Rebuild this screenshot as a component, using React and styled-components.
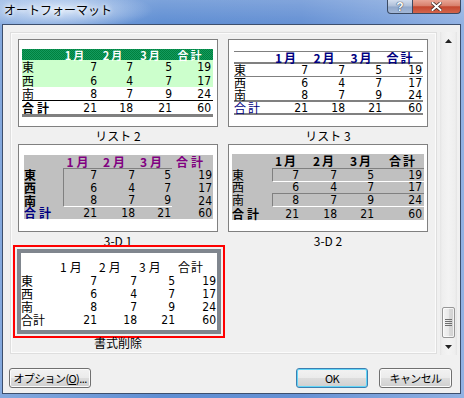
import React from 'react';
import styled, { createGlobalStyle, css } from 'styled-components';

const JP = `"Noto Sans CJK JP", "Liberation Sans", sans-serif`;
const NUM = `"Liberation Sans Narrow", "DejaVu Sans Condensed", "Liberation Sans", "Noto Sans CJK JP", sans-serif`;

const GlobalStyle = createGlobalStyle`
  html, body { margin: 0; padding: 0; }
  body { width: 464px; height: 398px; overflow: hidden; background: #6f9ad8; font-family: ${JP}; }
  *, *::before, *::after { box-sizing: border-box; }
`;

const HEAD = ['1月', '2月', '3月', '合計'];
const ROWS = [
  ['東', 7, 7, 5, 19],
  ['西', 6, 4, 7, 17],
  ['南', 8, 7, 9, 24],
];
const TOTAL = ['合計', 21, 18, 21, 60];

/* ---------- window chrome ---------- */
const Frame = styled.div`
  width: 464px;
  height: 398px;
  display: flex;
  flex-direction: column;
  padding: 0 3px 4px 2px;
  background:
    radial-gradient(ellipse 95px 20px at 58px 10px, rgba(222, 234, 250, 0.95), rgba(222, 234, 250, 0) 100%),
    linear-gradient(to bottom, rgba(255, 255, 255, 0.18), rgba(255, 255, 255, 0) 24px),
    linear-gradient(to right, #84a9de 0%, #5f8ed3 35%, #6691d4 65%, #92b2e3 100%);
`;

const TitleBar = styled.div`
  height: 24px;
  flex: none;
  display: flex;
  align-items: flex-start;
`;

const TitleText = styled.div`
  padding: 3px 0 0 2px;
  font: 12px/14px ${JP};
  color: #000;
  text-shadow: 0 0 4px #fff, 0 0 6px #fff;
`;

const CaptionButtons = styled.div`
  margin-left: auto;
  display: flex;
  height: 14px;
`;

const CapBtn = styled.div`
  height: 14px;
  width: ${p => p.$w}px;
  display: flex;
  align-items: center;
  justify-content: center;
  border: 1px solid #3a4a63;
  border-top: none;
  ${p => p.$close
    ? css`
        border-left: none;
        border-radius: 0 0 4px 0;
        background: linear-gradient(#e9a696 0%, #d8806c 45%, #c4472f 52%, #d3654c 100%);
      `
    : css`
        border-radius: 0 0 0 4px;
        background: linear-gradient(#d3deee 0%, #aebfd9 48%, #91a8ca 52%, #a3b8d8 100%);
      `}
  color: #fff;
  font: bold 12px/12px "Liberation Sans", sans-serif;
  text-shadow: 0 0 1px #27344a, 0 0 1px #27344a;
`;

const Client = styled.div`
  flex: 1;
  display: flex;
  flex-direction: column;
  background: #f0f0f0;
  border: 1px solid #3d4f6d;
  padding: 7px 3px 5px 7px;
`;

const Main = styled.div`
  display: flex;
  align-items: flex-start;
  gap: 3px;
  height: 323px;
`;

const Panel = styled.div`
  width: 427px;
  height: 322px;
  border: 1px solid #dedede;
  box-shadow: inset 0 0 0 1px #fbfbfb;
  overflow: hidden;
  padding: 6px 0 0 7px;
`;

/* ---------- scrollbar ---------- */
const ScrollBar = styled.div`
  width: 17px;
  height: 323px;
  display: flex;
  flex-direction: column;
  background: linear-gradient(to right, #e4e4e4 0, #eeeeee 2px, #f3f3f3 50%, #eeeeee 15px, #e4e4e4 100%);
`;

const ArrowBox = styled.div`
  height: 17px;
  flex: none;
  display: flex;
  align-items: center;
  justify-content: center;
`;

const Track = styled.div`
  flex: 1;
  display: flex;
  flex-direction: column;
  justify-content: flex-end;
  align-items: center;
`;

const Thumb = styled.div`
  width: 13px;
  height: 31px;
  border: 1px solid #979797;
  border-radius: 2px;
  background: linear-gradient(to right, #f4f4f4 0%, #e9e9e9 50%, #dadada 51%, #d1d1d1 100%);
  box-shadow: inset 0 0 0 1px rgba(255, 255, 255, 0.7);
  display: flex;
  align-items: center;
  justify-content: center;
`;

/* ---------- gallery ---------- */
const Gallery = styled.div`
  display: grid;
  grid-template-columns: 200px 200px;
  column-gap: 10px;
  grid-auto-rows: 105px;
`;

const Item = styled.div`
  display: flex;
  flex-direction: column;
`;

const Preview = styled.div`
  flex: none;
  background: #fff;
  ${p => p.$selected
    ? css`
        width: 204px;
        height: 85px;
        margin-left: -1px;
        border: 4px solid #80868e;
        outline: 2px solid #ff0000;
        outline-offset: 2px;
      `
    : css`
        width: 200px;
        height: 88px;
        border: 1px solid #808080;
      `}
`;

const Caption = styled.div`
  height: 17px;
  font: 12px/17px ${JP};
  text-align: center;
  color: #000;
  white-space: pre;
`;

/* ---------- sheet parts ---------- */
const Sheet = styled.div`
  margin: ${p => p.$mt}px 0 0 ${p => p.$ml}px;
  width: ${p => p.$w}px;
  background: ${p => p.$bg || 'transparent'};
`;

const Row = styled.div`
  display: grid;
  grid-template-columns: ${p => p.$cols};
  height: ${p => p.$h}px;
  align-items: ${p => p.$align || 'center'};
  background: ${p => p.$bg || 'transparent'};
  border-top: ${p => p.$bt || 'none'};
  border-bottom: ${p => p.$bb || 'none'};
  ${p => p.$dots && css`
    background: repeating-conic-gradient(#00813e 0 25%, #139a5e 0 50%) 0 0 / 2px 2px;
  `}
`;

const Cell = styled.span`
  display: block;
  align-self: center;
  font-family: ${p => (p.$jp ? JP : NUM)};
  font-size: ${p => p.$fs || 12}px;
  line-height: 12px;
  text-align: ${p => p.$align || 'right'};
  padding-right: ${p => (p.$pr ?? 1)}px;
  padding-left: ${p => p.$pl || 0}px;
  color: ${p => p.$color || '#000'};
  font-weight: ${p => (p.$bold ? 700 : 400)};
  letter-spacing: ${p => p.$ls || 0}px;
  white-space: nowrap;
`;

const Group = styled.div`
  display: grid;
  grid-template-columns: ${p => p.$cols};
  height: 100%;
  align-items: center;
  border-left: 1px solid #808080;
  border-top: ${p => (p.$top ? '1px solid #808080' : 'none')};
  border-bottom: ${p => (p.$bottom ? '1px solid #ffffff' : 'none')};
`;

/* ---------- formats ---------- */
function List2() {
  const cols = '36px 40px 36px 39px 40px';
  return (
    <Sheet $mt={9} $ml={3} $w={191}>
      <Row $cols={cols} $h={11} $dots>
        <span />
        {HEAD.map(h => (
          <Cell key={h} $jp $fs={11} $bold $color="#fff" $align="center" $pr={5} $ls={2}>{h}</Cell>
        ))}
      </Row>
      {ROWS.map((r, i) => (
        <Row key={r[0]} $cols={cols} $h={i === 1 ? 13 : 14}
          $bg={i < 2 ? '#ccffcc' : '#fff'} $bb={i === 2 ? '1px solid #000' : 'none'}>
          <Cell $jp $align="left">{r[0]}</Cell>
          {r.slice(1).map((n, j) => <Cell key={j} $pr={j === 3 ? 2 : 1}>{n}</Cell>)}
        </Row>
      ))}
      <Row $cols={cols} $h={16} $bb="3px solid #808080">
        <Cell $jp $align="left" $bold $ls={3}>{TOTAL[0]}</Cell>
        {TOTAL.slice(1).map((n, j) => <Cell key={j} $pr={j === 3 ? 2 : 1}>{n}</Cell>)}
      </Row>
    </Sheet>
  );
}

function List3() {
  const cols = '35px 40px 37px 37px 40px';
  const heights = [13, 12, 13];
  const borders = ['1px solid #808080', 'none', '2px solid #808080'];
  return (
    <Sheet $mt={11} $ml={5} $w={189}>
      <Row $cols={cols} $h={13} $bt="1px solid #808080" $bb="2px solid #808080">
        <span />
        {HEAD.map(h => (
          <Cell key={h} $jp $bold $color="#000080" $align="center" $pr={5} $ls={2}>{h}</Cell>
        ))}
      </Row>
      {ROWS.map((r, i) => (
        <Row key={r[0]} $cols={cols} $h={heights[i]} $bb={borders[i]}>
          <Cell $jp $align="left">{r[0]}</Cell>
          {r.slice(1).map((n, j) => <Cell key={j}>{n}</Cell>)}
        </Row>
      ))}
      <Row $cols={cols} $h={13} $bb="2px solid #808080">
        <Cell $jp $align="left" $color="#000080" $ls={2}>{TOTAL[0]}</Cell>
        {TOTAL.slice(1).map((n, j) => <Cell key={j}>{n}</Cell>)}
      </Row>
    </Sheet>
  );
}

function ThreeD1() {
  const cols = '39px 35px 38px 36px 41px';
  return (
    <Sheet $mt={10} $ml={5} $w={189} $bg="#c0c0c0">
      <Row $cols={cols} $h={13}>
        <span />
        {HEAD.map(h => (
          <Cell key={h} $jp $bold $color="#800080" $align="center" $pr={3} $ls={3}>{h}</Cell>
        ))}
      </Row>
      {ROWS.map((r, i) => (
        <Row key={r[0]} $cols="39px 109px 41px" $h={13} $align="stretch">
          <Cell $jp $align="left" $bold>{r[0]}</Cell>
          <Group $cols="34px 38px 36px" $top={i === 0} $bottom={i === 2}>
            {r.slice(1, 4).map((n, j) => <Cell key={j}>{n}</Cell>)}
          </Group>
          <Cell>{r[4]}</Cell>
        </Row>
      ))}
      <Row $cols={cols} $h={12}>
        <Cell $jp $align="left" $bold $color="#000080" $ls={3}>{TOTAL[0]}</Cell>
        {TOTAL.slice(1).map((n, j) => <Cell key={j}>{n}</Cell>)}
      </Row>
    </Sheet>
  );
}

function ThreeD2() {
  const cols = '40px 28px 38px 37px 49px';
  const heights = [13, 12, 14];
  return (
    <Sheet $mt={9} $ml={3} $w={192} $bg="#c0c0c0">
      <Row $cols={cols} $h={14}>
        <span />
        {HEAD.map((h, j) => (
          <Cell key={h} $jp $bold $pr={j === 3 ? 7 : 2} $ls={2}>{h}</Cell>
        ))}
      </Row>
      {ROWS.map((r, i) => (
        i === 1 ? (
          <Row key={r[0]} $cols={cols} $h={heights[i]}>
            <Cell $jp $align="left">{r[0]}</Cell>
            {r.slice(1).map((n, j) => <Cell key={j} $pr={j === 3 ? 2 : 1}>{n}</Cell>)}
          </Row>
        ) : (
          <Row key={r[0]} $cols="40px 152px" $h={heights[i]} $align="stretch">
            <Cell $jp $align="left">{r[0]}</Cell>
            <Group $cols="27px 38px 37px 49px" $top $bottom>
              {r.slice(1).map((n, j) => <Cell key={j} $pr={j === 3 ? 2 : 1}>{n}</Cell>)}
            </Group>
          </Row>
        )
      ))}
      <Row $cols={cols} $h={13}>
        <Cell $jp $align="left" $bold $ls={3}>{TOTAL[0]}</Cell>
        {TOTAL.slice(1).map((n, j) => <Cell key={j} $pr={j === 3 ? 2 : 1}>{n}</Cell>)}
      </Row>
    </Sheet>
  );
}

function Plain() {
  const cols = '38px 39px 40px 38px 41px';
  return (
    <Sheet $mt={7} $ml={0} $w={196}>
      <Row $cols={cols} $h={14}>
        <span />
        {HEAD.map((h, j) => (
          <Cell key={h} $jp $align="left" $pl={j === 3 ? 2 : 1} $ls={j === 3 ? 1 : 3}>{h}</Cell>
        ))}
      </Row>
      {[...ROWS, TOTAL].map(r => (
        <Row key={r[0] + r[1]} $cols={cols} $h={13}>
          <Cell $jp $align="left">{r[0]}</Cell>
          {r.slice(1).map((n, j) => <Cell key={j}>{n}</Cell>)}
        </Row>
      ))}
    </Sheet>
  );
}

/* ---------- buttons ---------- */
const ButtonRow = styled.div`
  display: flex;
  align-items: center;
  margin: 13px 4px 0 -1px;
`;

const Button = styled.button`
  flex: none;
  height: 20px;
  width: ${p => p.$w}px;
  margin-left: ${p => p.$ml || 0}px;
  padding: 0;
  border: 1px solid ${p => (p.$default ? '#3c7fb1' : '#707070')};
  border-radius: 3px;
  background: linear-gradient(#f2f2f2 0%, #ebebeb 48%, #dddddd 52%, #cfcfcf 100%);
  box-shadow: inset 0 0 0 1px ${p => (p.$default ? '#62d6f8' : '#fbfbfb')};
  font: 11px/18px ${JP};
  letter-spacing: -0.6px;
  white-space: nowrap;
  overflow: visible;
  color: #000;
  text-align: center;
  cursor: default;
  u { text-decoration: underline; text-underline-offset: 1px; }
`;

export default function App() {
  return (
    <>
      <GlobalStyle />
      <Frame>
        <TitleBar>
          <TitleText>オートフォーマット</TitleText>
          <CaptionButtons>
            <CapBtn $w={26}>?</CapBtn>
            <CapBtn $w={48} $close>
              <svg width="11" height="9" viewBox="0 0 11 9">
                <path d="M1.5 1 L9.5 8 M9.5 1 L1.5 8" stroke="#3b2520" strokeWidth="3.4" strokeLinecap="square" />
                <path d="M1.5 1 L9.5 8 M9.5 1 L1.5 8" stroke="#ffffff" strokeWidth="2" strokeLinecap="square" />
              </svg>
            </CapBtn>
          </CaptionButtons>
        </TitleBar>
        <Client>
          <Main>
            <Panel>
              <Gallery>
                <Item>
                  <Preview><List2 /></Preview>
                  <Caption>リスト 2</Caption>
                </Item>
                <Item>
                  <Preview><List3 /></Preview>
                  <Caption>リスト 3</Caption>
                </Item>
                <Item>
                  <Preview><ThreeD1 /></Preview>
                  <Caption>3-D 1</Caption>
                </Item>
                <Item>
                  <Preview><ThreeD2 /></Preview>
                  <Caption>3-D 2</Caption>
                </Item>
                <Item>
                  <Preview $selected><Plain /></Preview>
                  <Caption>書式削除</Caption>
                </Item>
              </Gallery>
            </Panel>
            <ScrollBar>
              <ArrowBox>
                <svg width="7" height="4" viewBox="0 0 7 4"><polygon points="0,4 3.5,0 7,4" fill="#222" /></svg>
              </ArrowBox>
              <Track>
                <Thumb>
                  <svg width="7" height="7" viewBox="0 0 7 7">
                    {[0.5, 2.5, 4.5, 6.5].map(y => (
                      <line key={y} x1="0" x2="7" y1={y} y2={y} stroke="#6e6e6e" strokeWidth="1" />
                    ))}
                  </svg>
                </Thumb>
              </Track>
              <ArrowBox>
                <svg width="7" height="4" viewBox="0 0 7 4"><polygon points="0,0 7,0 3.5,4" fill="#222" /></svg>
              </ArrowBox>
            </ScrollBar>
          </Main>
          <ButtonRow>
            <Button $w={82}>オプション(<u>O</u>)...</Button>
            <Button $w={72} $ml={205} $default>OK</Button>
            <Button $w={73} $ml={11}>キャンセル</Button>
          </ButtonRow>
        </Client>
      </Frame>
    </>
  );
}
